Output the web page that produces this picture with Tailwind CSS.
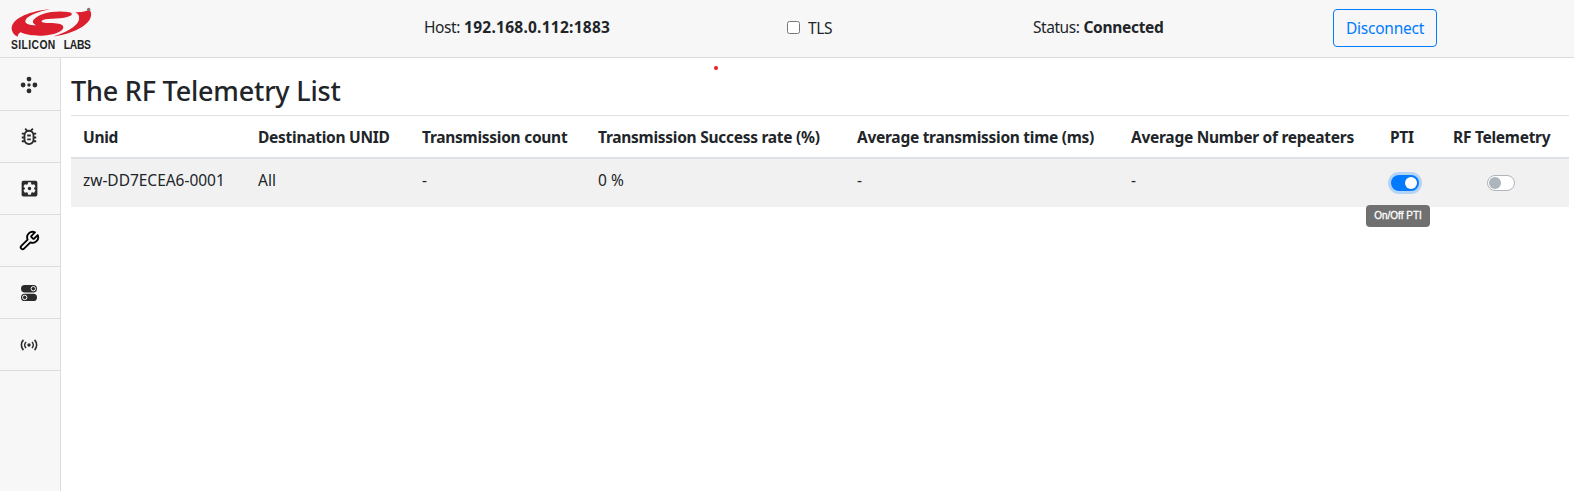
<!DOCTYPE html>
<html lang="en">
<head>
<meta charset="utf-8">
<title>RF Telemetry</title>
<script src="https://cdn.jsdelivr.net/npm/@tailwindcss/browser@4"></script>
</head>
<body class="h-screen overflow-hidden bg-white font-['Noto_Sans',sans-serif] text-[15.5px] leading-6 font-normal text-[#212529] flex flex-col">
<header class="relative h-[58px] shrink-0 bg-[#f7f7f7] border-b border-[#dcdcdc] flex">
  <div class="w-[424px] pl-2 pt-1.5">
    <svg class="w-[86px] h-[46px]" viewBox="0 0 258 138">
      <g fill="#dc1f2e">
        <path d="M128 9C70 14 12 36 11 66C11 78 18 87 29 92C29 86 33 82 38 79C52 87 80 90 103 89C142 87 167 75 166 63C165 53 145 51 125 51C100 51 96 46 105 42C120 36 165 42 190 28C196 20 185 17 165 17C125 15 90 26 76 42C72 50 78 54 84 58C65 58 52 54 52 46C52 32 85 18 128 9Z"/>
        <path d="M202 19C222 19 235 17 243 10C250 17 252 27 246 39C232 66 180 86 137 91C175 78 205 62 212 44C216 32 212 24 202 19Z"/>
      </g>
      <circle cx="242" cy="10" r="5" fill="#777"/>
      <g font-family="Liberation Sans" font-weight="700" font-size="31" fill="#222">
        <text transform="translate(9 129) scale(1 1.2)" textLength="133">SILICON</text>
        <text transform="translate(167 129) scale(1 1.2)" textLength="82">LABS</text>
      </g>
    </svg>
  </div>
  <div class="w-[363px] pt-[15px]"><span class="tracking-[-0.4px]">Host:</span> <span class="font-bold tracking-[0.25px]">192.168.0.112:1883</span></div>
  <label class="w-[246px] pt-4 flex gap-2"><span class="mt-[5px] size-[13px] rounded-[2.5px] border border-[#767676] bg-white"></span><span class="tracking-[-0.4px]">TLS</span></label>
  <div class="w-[300px] pt-[15px]"><span class="tracking-[-0.45px]">Status:</span> <span class="font-bold tracking-[-0.3px]">Connected</span></div>
  <button class="mt-[9px] h-[38px] w-[104px] rounded border border-[#007bff] text-[#007bff] tracking-[-0.25px]">Disconnect</button>
  <span class="absolute left-[714px] top-[66px] size-1 rounded-full bg-[#ed1c24]"></span>
</header>
<div class="flex flex-1">
  <nav class="w-[61px] shrink-0 bg-[#f7f7f7] border-r border-[#dcdcdc] text-[#2b2b2b] -mt-px">
    <a class="flex h-[54px] items-center justify-center border-b border-[#dcdcdc] pr-0.5 pt-[3px]">
      <svg class="size-5" viewBox="0 0 20 20" fill="currentColor"><circle cx="10" cy="4.100" r="2.400"/><circle cx="10" cy="15.900" r="2.400"/><circle cx="4.100" cy="10" r="2.400"/><circle cx="15.900" cy="10" r="2.400"/><circle cx="10" cy="10" r="1.700"/></svg>
    </a>
    <a class="flex h-[52px] items-center justify-center border-b border-[#dcdcdc] pr-0.5">
      <svg class="h-[21px] w-[18px]" preserveAspectRatio="none" viewBox="2 1 20 22" fill="currentColor"><path d="M20 8h-2.810c-.45-.78-1.070-1.450-1.820-1.960L17 4.410 15.590 3l-2.170 2.170a6 6 0 0 0-2.830 0L8.410 3 7 4.410l1.620 1.630C7.880 6.550 7.260 7.220 6.810 8H4v2h2.090c-.05.33-.09.66-.09 1v1H4v2h2v1c0 .34.04.67.09 1H4v2h2.810a6 6 0 0 0 10.380 0H20v-2h-2.090c.05-.33.09-.66.09-1v-1h2v-2h-2v-1c0-.34-.04-.67-.09-1H20V8zm-4 7a4 4 0 0 1-8 0v-4a4 4 0 0 1 8 0v4zm-6-1h4v2h-4zm0-4h4v2h-4z"/></svg>
    </a>
    <a class="flex h-[52px] items-center justify-center border-b border-[#dcdcdc] pr-0.5">
      <svg class="size-[21px]" viewBox="0 0 24 24" fill="currentColor"><path d="M12 10a2 2 0 1 0 0 4 2 2 0 0 0 0-4zm7-7H5a2 2 0 0 0-2 2v14c0 1.100.9 2 2 2h14a2 2 0 0 0 2-2V5a2 2 0 0 0-2-2zm-1.750 9c0 .23-.02.46-.05.68l1.480 1.160c.13.11.17.3.08.45l-1.400 2.420c-.09.15-.27.21-.43.15l-1.740-.7c-.36.28-.76.51-1.180.69l-.26 1.850c-.03.17-.18.3-.35.3h-2.800c-.17 0-.32-.13-.35-.29l-.26-1.850c-.43-.18-.82-.41-1.180-.69l-1.740.7c-.16.06-.34 0-.43-.15l-1.400-2.420c-.09-.15-.05-.34.08-.45l1.480-1.160A6 6 0 0 1 6.750 12c0-.23.02-.46.05-.69l-1.480-1.160c-.13-.11-.17-.3-.08-.45l1.400-2.420c.09-.15.27-.21.43-.15l1.740.7c.36-.28.76-.51 1.180-.69l.26-1.850c.03-.17.18-.3.35-.3h2.800c.17 0 .32.13.35.29l.26 1.850c.43.18.82.41 1.180.69l1.740-.7c.16-.06.34 0 .43.15l1.400 2.420c.09.15.05.34-.08.45l-1.480 1.160c.03.23.05.46.05.7z"/></svg>
    </a>
    <a class="flex h-[52px] items-center justify-center border-b border-[#dcdcdc] pr-0.5">
      <svg class="size-[22px] text-black" viewBox="0 0 24 24" fill="none" stroke="currentColor" stroke-width="2" stroke-linejoin="round"><path d="M14.700 6.300a1 1 0 0 0 0 1.400l1.600 1.600a1 1 0 0 0 1.400 0l3.770-3.770a6 6 0 0 1-7.940 7.940l-6.910 6.910a2.120 2.120 0 0 1-3-3l6.910-6.910a6 6 0 0 1 7.940-7.940z"/></svg>
    </a>
    <a class="flex h-[52px] items-center justify-center border-b border-[#dcdcdc] pr-0.5">
      <svg class="size-[18px]" viewBox="0 0 18 18"><g fill="currentColor"><rect x="1" y="1" width="16" height="7.400" rx="3.700"/><rect x="1" y="9.700" width="16" height="7.400" rx="3.700"/></g><g fill="none" stroke="#f7f7f7"><circle cx="13.300" cy="4.700" r="2.200"/><circle cx="4.700" cy="13.400" r="2.200"/></g></svg>
    </a>
    <a class="flex h-[52px] items-center justify-center border-b border-[#dcdcdc] pr-0.5">
      <svg class="size-[18px]" viewBox="0 0 18 18" fill="none" stroke="currentColor" stroke-width="1.600"><circle cx="9" cy="9" r="1.700" fill="currentColor" stroke="none"/><path d="M6 6a4.300 4.300 0 0 0 0 6M12 6a4.300 4.300 0 0 1 0 6M3.400 3.900a7.500 7.500 0 0 0 0 10.200M14.600 3.900a7.500 7.500 0 0 1 0 10.200"/></svg>
    </a>
  </nav>
  <main class="flex-1 pl-2.5 pr-[5px] pt-4">
    <h1 class="h-[41px] text-[27px] leading-[34px] font-medium tracking-[-0.2px]">The RF Telemetry List</h1>
    <table class="w-[1498px] table-fixed border-separate border-spacing-0 text-left">
      <colgroup><col class="w-[175px]"><col class="w-[164px]"><col class="w-[176px]"><col class="w-[259px]"><col class="w-[274px]"><col class="w-[259px]"><col class="w-[63px]"><col class="w-[128px]"></colgroup>
      <thead>
        <tr class="h-11 align-top tracking-[-0.27px] whitespace-nowrap *:border-t *:border-b-2 *:border-[#dee2e6] *:pl-3 *:pt-[9px] *:font-bold">
          <th>Unid</th><th>Destination UNID</th><th>Transmission count</th><th>Transmission Success rate (%)</th><th>Average transmission time (ms)</th><th>Average Number of repeaters</th><th>PTI</th><th>RF Telemetry</th>
        </tr>
      </thead>
      <tbody>
        <tr class="h-12 align-top bg-[#f1f1f1] whitespace-nowrap *:pl-3 *:pt-[9px]">
          <td class="tracking-[-0.03px]">zw-DD7ECEA6-0001</td><td>All</td><td>-</td><td>0 %</td><td>-</td><td>-</td>
          <td>
            <div class="relative ml-px mt-[7px] h-4 w-7 rounded-full bg-[#007bff] p-0.5 ring-3 ring-[#007bff]/25">
              <div class="ml-auto size-3 rounded-full bg-white"></div>
              <div class="absolute -left-[25px] top-[30px] h-[22px] w-16 rounded bg-[#707070] text-center font-['Liberation_Sans',sans-serif] text-[10px] leading-[21px] font-normal text-white [-webkit-text-stroke:0.3px_white]">On/Off PTI</div>
            </div>
          </td>
          <td><div class="ml-[34px] mt-[7px] h-4 w-7 rounded-full border border-[#adb5bd] bg-white p-px"><div class="size-3 rounded-full bg-[#adb5bd]"></div></div></td>
        </tr>
      </tbody>
    </table>
  </main>
</div>
</body>
</html>
